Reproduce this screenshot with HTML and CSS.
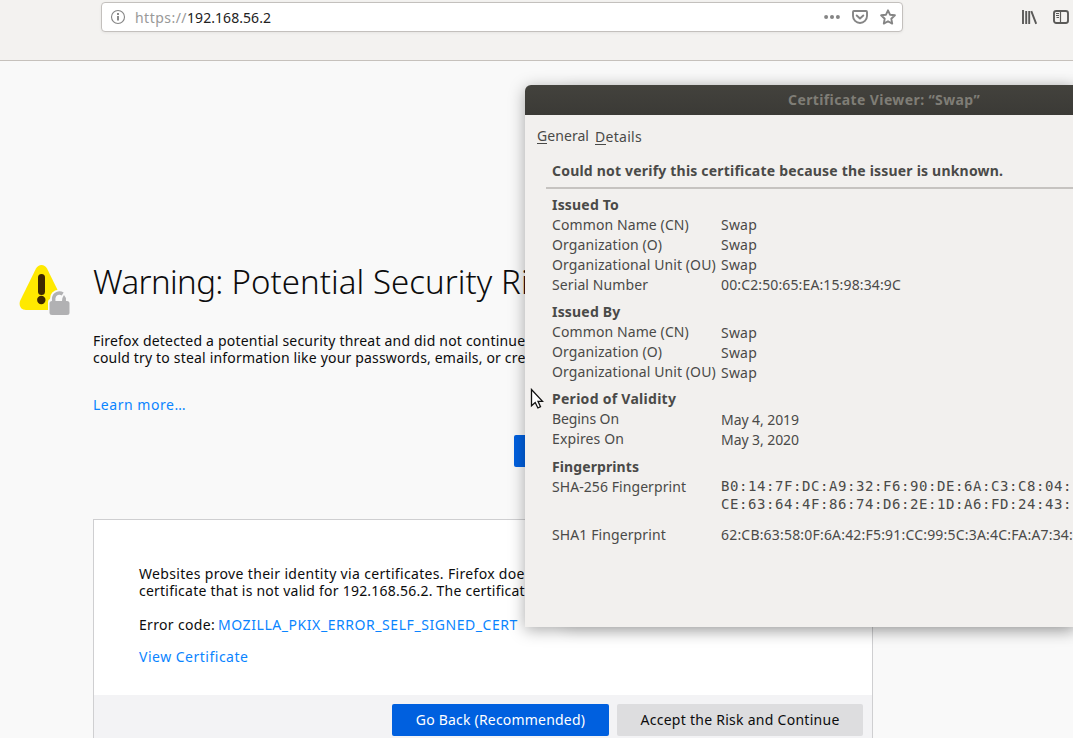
FILE: index.html
```html
<!DOCTYPE html>
<html lang="en">
<head>
<meta charset="utf-8">
<title>Warning: Potential Security Risk Ahead</title>
<link rel="stylesheet" href="styles.css">
</head>
<body>
<header class="toolbar">
  <div class="urlbar">
    <svg class="info" width="16" height="16" viewBox="0 0 16 16" fill="none" stroke="#858585"><circle cx="8" cy="8" r="6.5" stroke-width="1.1"/><path d="M8 7v4.6M8 4v2" stroke-width="1.9"/></svg>
    <span class="scheme">https://</span><span class="host">192.168.56.2</span>
    <div class="url-actions">
      <svg width="18" height="16" viewBox="0 0 18 16" fill="#858585"><circle cx="3.1" cy="8" r="2"/><circle cx="9" cy="8" r="2"/><circle cx="14.9" cy="8" r="2"/></svg>
      <svg width="16" height="16" viewBox="0 0 16 16" fill="none" stroke="#858585" stroke-width="1.9" stroke-linecap="round" stroke-linejoin="round"><path d="M1.900 2h12.200q.9 0 .9.9V7A7 7 0 0 1 1 7V2.900Q1 2 1.900 2z"/><path d="M4.700 6.500L8 9.500l3.300-3"/></svg>
      <svg width="16" height="16" viewBox="0 0 16 16" fill="none" stroke="#858585" stroke-width="1.900" stroke-linejoin="round"><path d="M8 1.300l2 4.400 4.900.6-3.600 3.400.9 4.900L8 12.200l-4.200 2.400.9-4.900L1.100 6.300 6 5.700z"/></svg>
    </div>
  </div>
  <div class="tools">
    <svg width="16" height="16" viewBox="0 0 16 16" fill="none" stroke="#5a5a58" stroke-width="1.900"><path d="M2 1v14M5.200 2v13M8.200 2v13M10.300 2.200L15.200 14.800"/></svg>
    <svg width="16" height="16" viewBox="0 0 16 16" fill="none" stroke="#5a5a58"><rect x="1" y="2" width="14" height="12" rx="2.200" stroke-width="1.900"/><path d="M7.500 2v12" stroke-width="1.200"/><path d="M3 4.500h3M3 6.500h3M3.500 8.500h2.500" stroke-width="1"/></svg>
  </div>
</header>

<main class="page">
  <svg class="warning" width="52" height="52" viewBox="0 0 52 52">
    <path d="M17 4.500Q19 1 22.500 1t5.500 3.500L44 37q2.500 9-5 9H7q-8-1-6-9z" fill="#ffe900"/>
    <path d="M22.500 13.500v14" stroke="#3e2800" stroke-width="7" stroke-linecap="round"/>
    <circle cx="22.300" cy="36" r="4.200" fill="#3e2800"/>
    <path d="M29 52V38q0-2.500 2-3 0-8.500 9-9.500h12v27z" fill="#f9f9f9"/>
    <path d="M34.700 38v-4a5.800 5.800 0 0 1 9-4" fill="none" stroke="#b1b1b3" stroke-width="3.500"/>
    <path d="M45 31q2.500 2.500 2 6h-4q-.5-2.500 2-6z" fill="#b1b1b3"/>
    <rect x="30.500" y="37" width="20" height="14" rx="2.500" fill="#b1b1b3"/>
  </svg>
  <section class="content">
    <h1><span class="lead">Warning:</span> Potential Security Ri</h1>
    <p class="intro"><span class="intro-a">Firefox detected a potential security threat and did not continue</span><br><span class="intro-b">could try to steal information like your passwords, emails, or cre</span></p>
    <a class="learn">Learn more…</a>
    <div class="actions"><span class="btn primary"></span></div>
    <div class="panel">
      <div class="panel-body">
        <p><span class="web-a">Websites prove their identity via certificates. Firefox doe</span><br><span class="web-b">certificate that is not valid for 192.168.56.2. The certificat</span></p>
        <p class="code"><span class="code-label">Error code:</span><a class="code-value">MOZILLA_PKIX_ERROR_SELF_SIGNED_CERT</a></p>
        <a class="view">View Certificate</a>
      </div>
      <div class="panel-foot">
        <span class="btn primary back">Go Back (Recommended)</span>
        <span class="btn accept">Accept the Risk and Continue</span>
      </div>
    </div>
  </section>
</main>

<aside class="dialog">
  <div class="titlebar">Certificate Viewer: “Swap”</div>
  <nav class="tabs"><span class="general"><i>G</i>eneral</span><span class="details"><i>D</i>etails</span></nav>
  <div class="status">Could not verify this certificate because the issuer is unknown.</div>
  <div class="fields">
    <h2>Issued To</h2>
    <dl>
      <dt>Common Name (CN)</dt><dd>Swap</dd>
      <dt>Organization (O)</dt><dd>Swap</dd>
      <dt>Organizational Unit (OU)</dt><dd>Swap</dd>
      <dt>Serial Number</dt><dd class="serial">00:C2:50:65:EA:15:98:34:9C</dd>
    </dl>
    <h2>Issued By</h2>
    <dl class="low">
      <dt>Common Name (CN)</dt><dd>Swap</dd>
      <dt>Organization (O)</dt><dd>Swap</dd>
      <dt>Organizational Unit (OU)</dt><dd>Swap</dd>
    </dl>
    <h2 class="period">Period of Validity</h2>
    <dl class="low dates">
      <dt>Begins On</dt><dd>May 4, 2019</dd>
      <dt class="expires">Expires On</dt><dd>May 3, 2020</dd>
    </dl>
    <h2 class="prints">Fingerprints</h2>
    <dl class="hashes">
      <dt class="sha256">SHA-256 Fingerprint</dt><dd class="mono">B0:14:7F:DC:A9:32:F6:90:DE:6A:C3:C8:04:<br>CE:63:64:4F:86:74:D6:2E:1D:A6:FD:24:43:</dd>
      <dt>SHA1 Fingerprint</dt><dd class="sha1">62:CB:63:58:0F:6A:42:F5:91:CC:99:5C:3A:4C:FA:A7:34:</dd>
    </dl>
  </div>
</aside>
<svg class="pointer" width="16" height="24" viewBox="0 0 16 24"><path d="M1.500 1.500v16.300l3.700-3.300 2.700 5.500 2.600-1.300-2.500-5.300h4.500z" fill="#fff" stroke="#111" stroke-width="1.300"/></svg>
</body>
</html>
```
FILE: styles.css
```css
* { box-sizing: border-box; }
html, body { height: 100%; }
body {
  margin: 0;
  overflow: hidden;
  position: relative;
  background: #f9f9f9;
  color: #0c0c0d;
  font: 14px/17px "Noto Sans", "Open Sans", sans-serif;
  white-space: nowrap;
}
h1, h2, p, dl, dd { margin: 0; }
svg { display: block; flex: none; }

.toolbar {
  height: 61px;
  padding: 2px 4px 0 101px;
  display: flex;
  justify-content: space-between;
  background: #f3f2f0;
  border-bottom: 1px solid #c6c1bc;
}
.urlbar {
  width: 802px;
  height: 30px;
  padding: 0 6px 0 8px;
  display: flex;
  align-items: center;
  background: #fff;
  border: 1px solid #c3c0bd;
  border-radius: 4px;
  box-shadow: 0 1px 3px rgba(0, 0, 0, .06);
}
.info { margin-right: 9px; }
.scheme { color: #999; letter-spacing: .47px; }
.host { color: #222; letter-spacing: .06px; }
.url-actions { margin-left: auto; display: flex; gap: 12px; }
.url-actions svg:first-child { margin-right: -1px; }
.tools { display: flex; gap: 16px; padding-top: 7px; }

.page {
  height: 677px;
  padding: 200px 0 0 18px;
  display: flex;
}
.warning { margin: 3px 22px 0 1px; }
.content { width: 780px; }
h1 { padding-top: 1px; font-size: 33px; font-weight: 300; line-height: 40px; letter-spacing: .06px; }
.lead { letter-spacing: -.6px; }
.intro { margin-top: 30px; }
.intro-a { letter-spacing: .2px; }
.intro-b { letter-spacing: .18px; }
a { color: #0a84ff; }
.learn { display: block; margin-top: 30px; letter-spacing: .53px; }
.actions { margin: 22px 0 52px; padding-right: 9px; display: flex; justify-content: flex-end; }
.actions .btn { width: 350px; }
.btn {
  height: 32px;
  padding-bottom: 2px;
  display: flex;
  align-items: center;
  justify-content: center;
  border-radius: 2px;
  background: #dddddf;
}
.primary { background: #0060df; color: #fff; }
.panel { height: 219px; border: 1px solid #cfcfd1; border-bottom: 0; background: #fff; }
.panel-body { height: 175px; padding: 45px 45px 0; }
.web-a { letter-spacing: .33px; }
.web-b { letter-spacing: .23px; }
.code { display: flex; margin: 17px 0 15px; }
.code-label { width: 79px; letter-spacing: .33px; }
.code-value { letter-spacing: .56px; }
.view { display: block; letter-spacing: .5px; }
.panel-foot {
  height: 43px;
  padding: 9px 9px 0;
  display: flex;
  justify-content: flex-end;
  gap: 8px;
  background: #f3f3f5;
}
.back { width: 217px; letter-spacing: .2px; }
.accept { width: 246px; letter-spacing: .27px; }

.dialog {
  position: absolute;
  left: 525px;
  top: 85px;
  width: 548px;
  height: 542px;
  background: #f2f0ee;
  color: #4a4a48;
  border-radius: 6px 0 0 0;
  box-shadow: 0 3px 16px rgba(0, 0, 0, .34), 40px 3px 16px rgba(0, 0, 0, .1);
  line-height: 20px;
  letter-spacing: .1px;
}
.titlebar {
  height: 30px;
  padding-left: 263px;
  line-height: 30px;
  font-weight: 700;
  letter-spacing: .39px;
  color: #7f7d76;
  background: linear-gradient(#43423d, #3b3a36);
  border-radius: 6px 0 0 0;
}
.tabs { display: flex; gap: 6px; padding: 11px 12px 0; height: 46px; }
.tabs i { display: inline-block; height: 18px; font-style: normal; border-bottom: 1px solid #4a4a48; }
.general { width: 52px; letter-spacing: .06px; }
.details { padding-top: 1px; letter-spacing: .29px; }
.status {
  margin-left: 21px;
  padding-left: 6px;
  height: 28px;
  font-weight: 700;
  letter-spacing: .2px;
  border-bottom: 2px solid #c6c3c0;
}
.fields { padding: 6px 0 0 27px; }
h2 { font-size: 14px; font-weight: 700; line-height: 20px; letter-spacing: .19px; }
dl { display: grid; grid-template-columns: 169px auto; grid-auto-rows: 20px; margin-bottom: 7px; }
dd { letter-spacing: .21px; }
.low dd { padding-top: 1px; }
.serial { letter-spacing: .13px; }
.period { letter-spacing: .28px; }
.dates { margin-bottom: 8px; }
.dates dt { letter-spacing: -.09px; }
.dates .expires { letter-spacing: .13px; }
.dates dd { letter-spacing: -.07px; }
.prints { letter-spacing: .09px; }
.hashes { grid-auto-rows: 48px 20px; }
.sha256 { letter-spacing: .07px; }
.mono { font: 14px/18px "DejaVu Sans Mono", monospace; letter-spacing: .57px; }
.sha1 { letter-spacing: .19px; overflow: hidden; }

.pointer { position: absolute; left: 530px; top: 388px; }
```
